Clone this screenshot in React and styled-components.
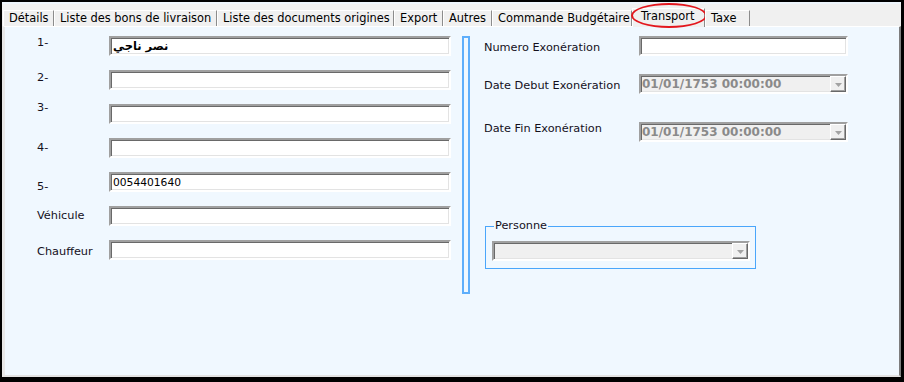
import React from 'react';
import styled, { createGlobalStyle } from 'styled-components';

const Global = createGlobalStyle`
  html, body { margin: 0; padding: 0; background: #000; }
  body {
    width: 904px; height: 382px; overflow: hidden;
    font-family: "DejaVu Sans", Verdana, sans-serif;
  }
  #root { width: 904px; height: 382px; display: flex; }
`;

const Window = styled.div`
  flex: 1;
  margin: 2px 3px 5px 2px;
  display: flex;
  flex-direction: column;
  background: #f0f0f0;
  border-top: 2px solid #eef5fc;
`;

const TabStrip = styled.div`
  height: 22px;
  display: flex;
  align-items: flex-end;
  padding-left: 1px;
  position: relative;
  z-index: 2;
`;

const Tab = styled.div`
  position: relative;
  box-sizing: border-box;
  width: ${p => p.$w}px;
  height: ${p => (p.$active ? 19 : 16)}px;
  margin-bottom: ${p => (p.$active ? -1 : 0)}px;
  padding: 0 0 ${p => (p.$active ? 3 : 0)}px ${p => (p.$active ? 8 : 5)}px;
  display: flex;
  align-items: center;
  background: #f0f0f0;
  border-top: 1px solid #ffffff;
  border-left: 1px solid #ffffff;
  border-right: 1px solid #8c8c8c;
  font-size: 11.4px;
  line-height: 15px;
  color: #000;
  white-space: nowrap;
`;

const Highlight = styled.span`
  position: absolute;
  left: -2px;
  right: -3px;
  top: -6px;
  bottom: -1px;
  border: 2px solid #e3161d;
  border-radius: 50%;
  pointer-events: none;
`;

const TabPage = styled.div`
  flex: 1;
  display: flex;
  align-items: flex-start;
  background: #f0f8ff;
  border-top: 1px solid #ffffff;
  border-left: 3px solid #e8e8e8;
  border-right: 2px solid #7d7d7d;
  border-bottom: 2px solid #e3e3e3;
  padding: 9px 0 0 32px;
`;

const LeftColumn = styled.div`
  display: grid;
  grid-template-columns: 72px 342px;
  grid-auto-rows: 20px;
  row-gap: 14px;
`;

const FieldLabel = styled.div`
  align-self: start;
  margin-top: ${p => p.$shift || 0}px;
  font-size: 11.3px;
  line-height: 20px;
  color: #14101c;
  white-space: nowrap;
`;

const sunken = `
  box-sizing: border-box;
  height: 20px;
  border: 2px solid;
  border-color: #a0a0a0 #ffffff #ffffff #a0a0a0;
  box-shadow: inset 1px 1px #696969, inset -1px -1px #e3e3e3;
`;

const TextBox = styled.input`
  ${sunken}
  width: 100%;
  margin: 0;
  padding: 0 2px;
  background: #fff;
  outline: none;
  font-family: "DejaVu Sans", Verdana, sans-serif;
  font-size: ${p => (p.$arabic ? 11.5 : 10.7)}px;
  font-weight: ${p => (p.$arabic ? 700 : 400)};
  color: #000;
`;

const Divider = styled.div`
  box-sizing: border-box;
  margin-left: 11px;
  width: 8px;
  height: 258px;
  border: 2px solid #5eaefb;
`;

const RightColumn = styled.div`
  margin-left: 14px;
  display: flex;
  flex-direction: column;
`;

const Row = styled.div`
  display: grid;
  grid-template-columns: 155px 209px;
  height: 20px;
  margin-top: ${p => p.$top || 0}px;
`;

const Combo = styled.div`
  ${sunken}
  width: ${p => (p.$w ? `${p.$w}px` : '100%')};
  display: flex;
  align-items: center;
  justify-content: space-between;
  background: #f0f0f0;
  padding-left: 1px;
  font-size: 12px;
  font-weight: 700;
  color: #8a8a8a;
  white-space: nowrap;
`;

const DropButton = styled.div`
  box-sizing: border-box;
  width: 16px;
  height: 16px;
  display: flex;
  align-items: center;
  justify-content: center;
  background: #f0f0f0;
  border: 1px solid;
  border-color: #ffffff #696969 #696969 #ffffff;
  box-shadow: inset -1px -1px #a0a0a0;
  padding-top: 1px;
`;

const Group = styled.fieldset`
  box-sizing: border-box;
  width: 271px;
  margin: 77px 0 0 1px;
  padding: 0 5px 7px 6px;
  border: 1px solid #4aa6fb;
`;

const Legend = styled.legend`
  margin-left: 2px;
  padding: 0 1px;
  font-size: 11.3px;
  line-height: 14px;
  color: #14101c;
`;

const GroupCombo = styled(Combo)`
  margin-top: 8px;
`;

const Arrow = () => (
  <svg width="7" height="4" viewBox="0 0 7 4">
    <polygon points="0,0 7,0 3.5,4" fill="#a3a3a3" />
  </svg>
);

const tabs = [
  { label: 'Détails', w: 51 },
  { label: 'Liste des bons de livraison', w: 163 },
  { label: 'Liste des documents origines', w: 177 },
  { label: 'Export', w: 49 },
  { label: 'Autres', w: 49 },
  { label: 'Commande Budgétaire', w: 140 },
  { label: 'Transport', w: 73, active: true },
  { label: 'Taxe', w: 45 },
];

const leftRows = [
  { label: '1-', shift: -3, value: 'نصر ناجي', arabic: true },
  { label: '2-', shift: -2, value: '' },
  { label: '3-', shift: -6, value: '' },
  { label: '4-', shift: 0, value: '' },
  { label: '5-', shift: 5, value: '0054401640' },
  { label: 'Véhicule', shift: 0, value: '' },
  { label: 'Chauffeur', shift: 2, value: '' },
];

export default function App() {
  return (
    <>
      <Global />
      <Window>
        <TabStrip>
          {tabs.map(t => (
            <Tab key={t.label} $w={t.w} $active={t.active}>
              {t.label}
              {t.active && <Highlight />}
            </Tab>
          ))}
        </TabStrip>
        <TabPage>
          <LeftColumn>
            {leftRows.map(r => (
              <React.Fragment key={r.label}>
                <FieldLabel $shift={r.shift}>{r.label}</FieldLabel>
                <TextBox readOnly value={r.value} $arabic={r.arabic} />
              </React.Fragment>
            ))}
          </LeftColumn>
          <Divider />
          <RightColumn>
            <Row>
              <FieldLabel $shift={2}>Numero Exonération</FieldLabel>
              <TextBox readOnly value="" />
            </Row>
            <Row $top={18}>
              <FieldLabel $shift={2}>Date Debut Exonération</FieldLabel>
              <Combo>
                <span>01/01/1753 00:00:00</span>
                <DropButton><Arrow /></DropButton>
              </Combo>
            </Row>
            <Row $top={28}>
              <FieldLabel $shift={-3}>Date Fin Exonération</FieldLabel>
              <Combo>
                <span>01/01/1753 00:00:00</span>
                <DropButton><Arrow /></DropButton>
              </Combo>
            </Row>
            <Group>
              <Legend>Personne</Legend>
              <GroupCombo $w={258}>
                <span />
                <DropButton><Arrow /></DropButton>
              </GroupCombo>
            </Group>
          </RightColumn>
        </TabPage>
      </Window>
    </>
  );
}
